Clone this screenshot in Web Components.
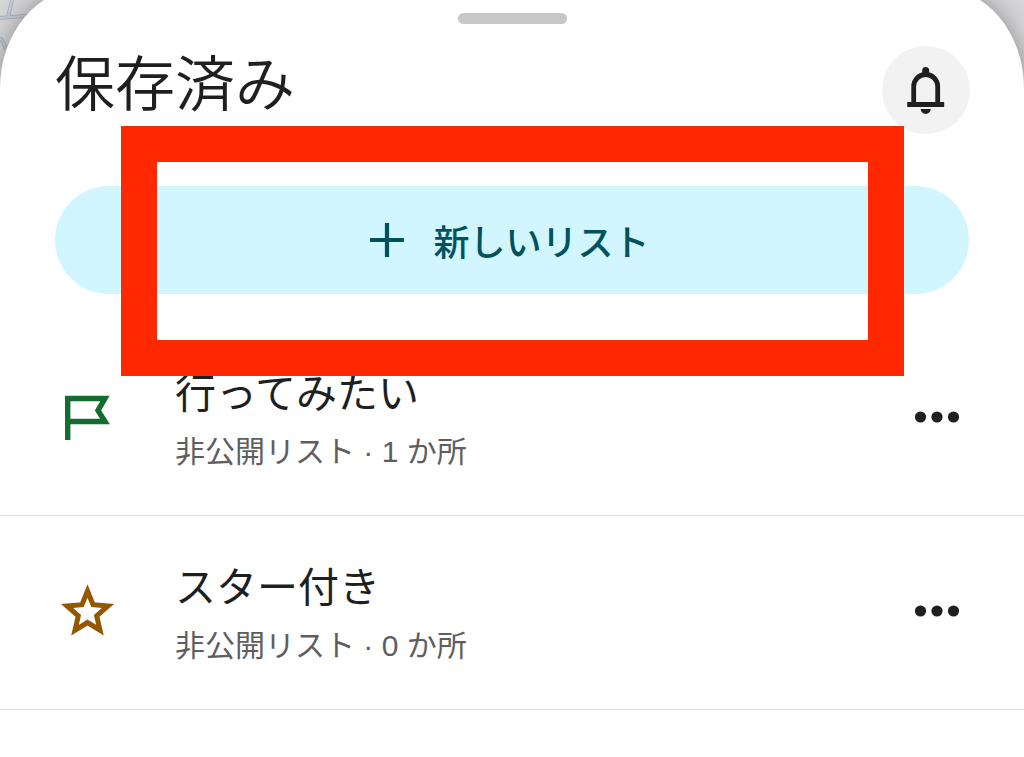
<!DOCTYPE html>
<html lang="ja">
<head>
<meta charset="utf-8">
<meta name="viewport" content="width=device-width, initial-scale=1">
<title>保存済み</title>
<style>
body {margin:0; font-family:"Liberation Sans", "Noto Sans CJK JP", sans-serif; color:#1f1f1f; background:#d6d5d7}
</style>
</head>
<body>
<saved-sheet>
    <sheet-header slot="header">保存済み</sheet-header>
    <new-list-button slot="action">新しいリスト</new-list-button>
    <saved-list icon="flag">
        行ってみたい
        <span slot="info">非公開リスト · 1 か所</span>
    </saved-list>
    <saved-list icon="star">
        スター付き
        <span slot="info">非公開リスト · 0 か所</span>
    </saved-list>
</saved-sheet>

<script>
class savedSheet extends HTMLElement {
    constructor() {
        super();
        this.sr = this.attachShadow({ mode: 'open' });
        this.sr.innerHTML = `
        <svg class="map" width="100%" height="120" aria-hidden="true">
            <path d="M0 18L24 16M24 16L40 18M8 17L12 0M0 38Q4 42 6 50" fill="none" stroke="#aab5c2" stroke-width="4"/>
            <path d="M0 18L24 16M24 16L40 18M8 17L12 0M0 38Q4 42 6 50" fill="none" stroke="#c5cdd6" stroke-width="2"/>
        </svg>
        <main>
            <div class="handle"></div>
            <slot name="header"></slot>
            <slot name="action"></slot>
            <div class="lists" role="list"><slot></slot></div>
        </main>
<style>
:host {display:flex; flex-direction:column; min-height:100vh; overflow:hidden; position:relative}
.map {position:absolute; left:0; top:0}
main {
    flex:1; position:relative; box-sizing:border-box; margin-top:-12px; padding-top:25px;
    background:#fff; border-radius:84px 84px 0 0 / 100px 100px 0 0; box-shadow:0 0 24px rgba(0,0,0,0.35);
}
.handle {width:109px; height:11px; margin:0 auto 22px; border-radius:6px; background:#c7c7c7}
.lists {margin-top:28px}
</style>
`;
    }
}

class sheetHeader extends HTMLElement {
    constructor() {
        super();
        this.sr = this.attachShadow({ mode: 'open' });
        this.sr.innerHTML = `
        <h1><slot></slot></h1>
        <button type="button" aria-label="通知">
            <svg width="40" height="50" viewBox="0 0 40 50" aria-hidden="true">
                <path d="M7.700 38V21.500a12 12 0 0 1 24 0V38" fill="none" stroke="#1f1f1f" stroke-width="4.800"/>
                <path d="M1.200 37h37v5h-37zM16.200 10V5.500a3.500 3.500 0 0 1 7 0V10zM14.700 44h10a5 5 0 0 1-10 0z" fill="#1f1f1f"/>
            </svg>
        </button>
<style>
:host {display:flex; justify-content:space-between; align-items:center; padding:0 54px 0 55px}
h1 {margin:0 0 8px; font-size:60px; line-height:80px; font-weight:350}
button {display:flex; align-items:center; justify-content:center; width:88px; height:88px; padding:0; border:0; border-radius:50%; background:#f2f2f2}
</style>
`;
    }
}

class newListButton extends HTMLElement {
    constructor() {
        super();
        this.sr = this.attachShadow({ mode: 'open' });
        this.sr.innerHTML = `
        <button type="button">
            <svg width="34" height="34" viewBox="0 0 34 34" aria-hidden="true"><path d="M0 17h34M17 0v34" stroke="#00525c" stroke-width="4.200"/></svg>
            <slot></slot>
        </button>
        <div class="marker"></div>
<style>
:host {display:block; position:relative; margin:52px 55px 0}
button {
    display:flex; align-items:center; justify-content:center; gap:29px; width:100%; height:108px; padding:0 4px 0 0;
    border:0; border-radius:54px; background:#d1f6ff; color:#00525c; font:500 36px/52px "Noto Sans CJK JP", sans-serif;
}
/* highlight around the button */
.marker {position:absolute; inset:-60px 65px -82px 66px; border:36px solid #ff2800; pointer-events:none}
</style>
`;
    }
}

class savedList extends HTMLElement {
    constructor() {
        super();
        this.icons = {
            flag: '<path d="M8.700 51V9.500H46L39 21.500L46 32.500H8.700" fill="none" stroke="#146c2e" stroke-width="5.400"/>',
            star: '<path d="M28.500 8L34 21.700L49 23L37.700 32.800L41 47.200L28.500 39.500L16 47.200L19.300 32.800L8 23L23 21.700Z" fill="none" stroke="#945700" stroke-width="5"/>'
        };
        this.sr = this.attachShadow({ mode: 'open' });
        this.sr.innerHTML = `
        <svg class="icon" width="56" height="56" viewBox="0 0 56 56" aria-hidden="true">${this.icons[this.getAttribute('icon')]}</svg>
        <div class="text">
            <div class="name"><slot></slot></div>
            <div class="info"><slot name="info"></slot></div>
        </div>
        <button type="button" aria-label="その他">
            <svg width="46" height="12" viewBox="0 0 46 12" fill="#1f1f1f" aria-hidden="true"><circle cx="6.500" cy="6" r="5.600"/><circle cx="23" cy="6" r="5.600"/><circle cx="39.500" cy="6" r="5.600"/></svg>
        </button>
<style>
:host {display:flex; align-items:center; padding:37px 54px 40px 59px; border-bottom:1px solid #dcdcdc}
.text {flex:1; margin-left:60px}
.name {font-size:41px; line-height:70px}
.info {font-size:30px; line-height:46px; color:#5e5e5e}
button {display:flex; align-items:center; justify-content:center; width:66px; height:66px; padding:0; border:0; background:none}
</style>
`;
    }

    connectedCallback() {
        this.setAttribute('role', 'listitem');
    }
}

customElements.define('saved-sheet', savedSheet);
customElements.define('sheet-header', sheetHeader);
customElements.define('new-list-button', newListButton);
customElements.define('saved-list', savedList);
</script>
</body>
</html>
